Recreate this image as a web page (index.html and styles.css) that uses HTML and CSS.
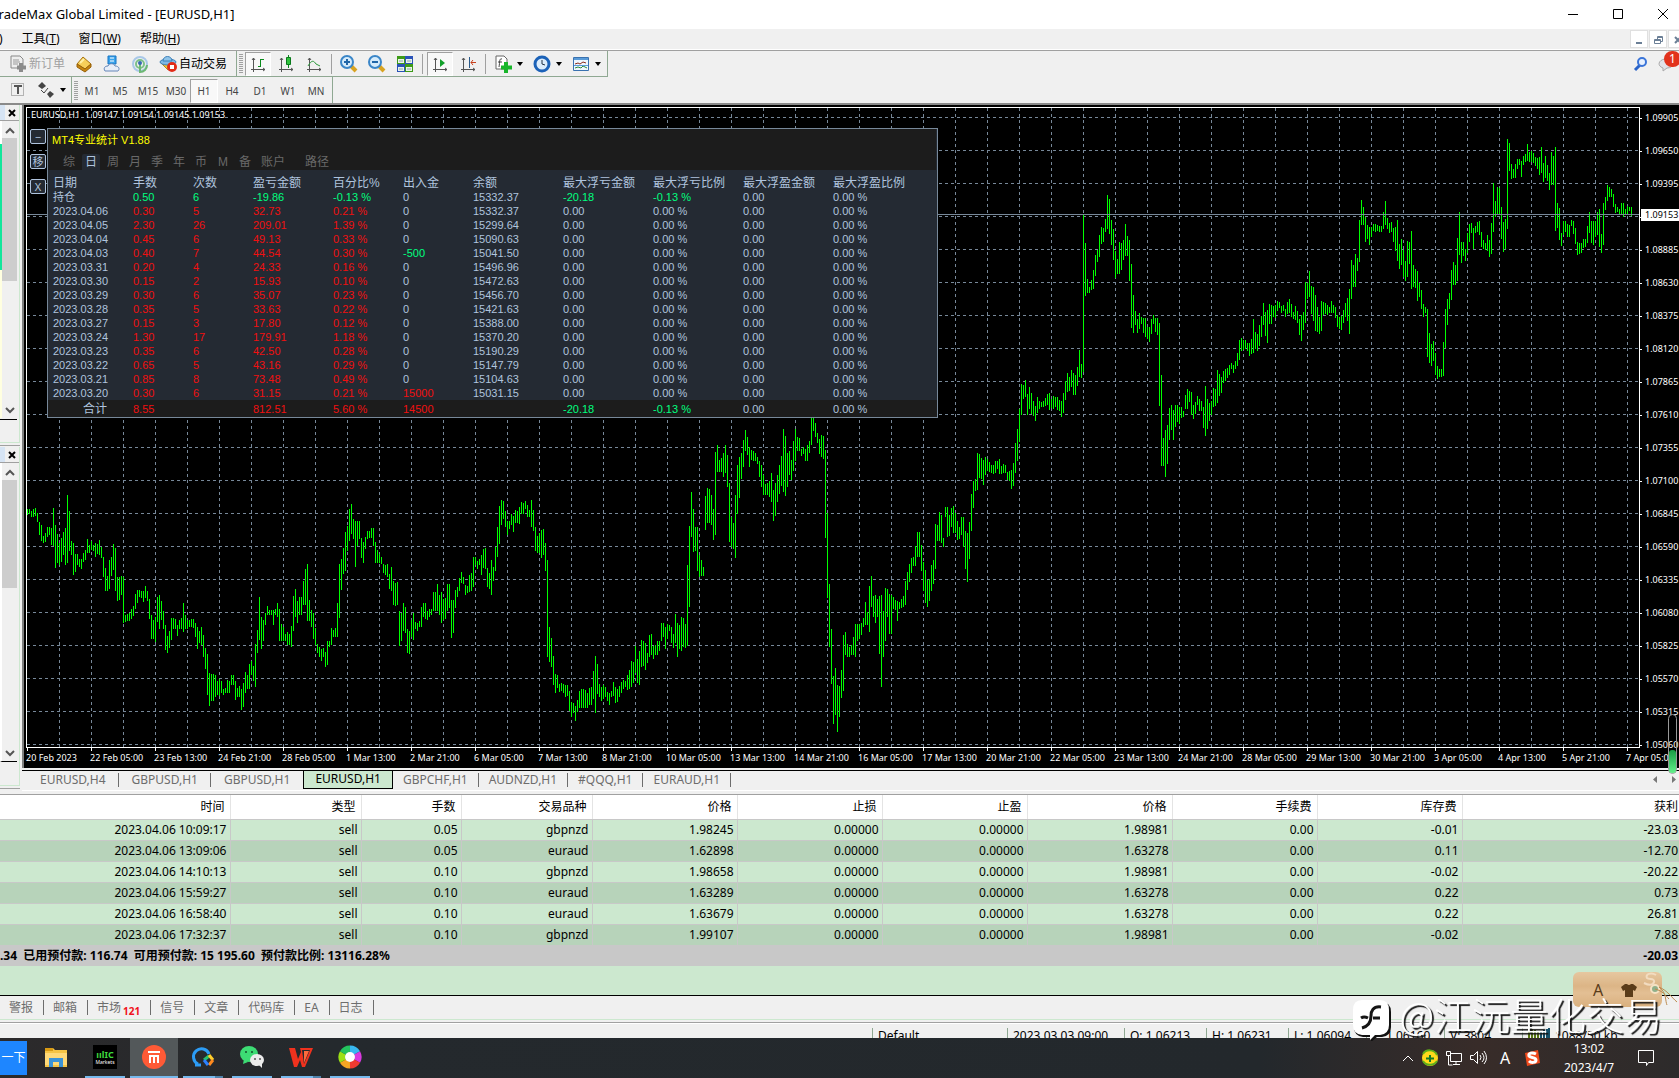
FILE: index.html
```html
<!doctype html>
<html lang="zh-CN">
<head>
	<meta charset="UTF-8">
	<title>TradeMax Global Limited - [EURUSD,H1]</title>

	<link rel="stylesheet" href="styles.css">
</head>
<body>
	<header class="titlebar">
		<h1>TradeMax Global Limited - [EURUSD,H1]</h1>
		<div class="window-buttons">
			<button aria-label="最小化"><svg width="12" height="12"><path d="M1 6.5h10" /></svg></button>
			<button aria-label="最大化"><svg width="12" height="12"><path d="M1.500 1.500h9v9h-9z" /></svg></button>
			<button aria-label="关闭"><svg width="12" height="12"><path d="M1 1l10 10M11 1L1 11" /></svg></button>
		</div>
	</header>

	<nav class="menubar">
		<button>)</button>
		<button>工具(<u>T</u>)</button>
		<button>窗口(<u>W</u>)</button>
		<button>帮助(<u>H</u>)</button>
		<div class="mdi-buttons">
			<button aria-label="最小化图表"><svg width="18" height="18"><path d="M5 12h6" stroke-width="2" /></svg></button>
			<button aria-label="还原图表"><svg width="18" height="18"><path d="M4.500 8.500h6v4h-6zM4.500 9.500h6M7.500 8V5.500h5v5H11M7.500 6.500h5" /></svg></button>
			<button aria-label="关闭图表"><svg width="18" height="18"><path d="M6 6l6 6M12 6l-6 6" stroke-width="2" /></svg></button>
		</div>
	</nav>

	<div class="toolbars">
		<div class="toolbar">
			<div class="group group-first">
				<button class="labelled disabled">
					<svg width="18" height="18"><path d="M2 1h9l3 3v9H2z" fill="#eee" stroke="#888" /><path d="M4 5h6M4 7h7M4 9h5" stroke="#999" /><path d="M12 8v9M8 12.500h9" stroke="#8b8b8b" stroke-width="4" /></svg>
					新订单
				</button>
				<button aria-label="数据"><svg width="18" height="18"><path d="M2 9l6-7 8 7-6 5z" fill="#f6cf5a" stroke="#a8730d" /><path d="M2 9l8 5 6-5v3l-6 5-8-5z" fill="#c8860f" stroke="#96610a" /><path d="M5 8l4-4" stroke="#fff0a8" stroke-width="2" /></svg></button>
				<button aria-label="账户"><svg width="18" height="18"><path d="M5 1h8v8H5z" fill="#3aa4ec" stroke="#1774c4" /><path d="M7 3h4M7 6h4" stroke="#fff" /><path d="M2 16c-2-3 0-5 3-5 1-3 6-3 7 0 4 0 5 3 3 5z" fill="#e8eef8" stroke="#6486b8" /></svg></button>
				<button aria-label="信号"><svg width="18" height="18" fill="none"><circle cx="9" cy="9" r="7" stroke="#a9c8e8" stroke-width="2" /><circle cx="9" cy="9" r="4" stroke="#7cc08a" stroke-width="2" /><path d="M9 8v9c4 0 7-3 7-7" stroke="#6cb873" stroke-width="2" /><circle cx="9" cy="8" r="2" fill="#3768b4" /></svg></button>
				<button class="labelled">
					<svg width="18" height="18"><path d="M1 7l8 8 7-7z" fill="#f1c232" stroke="#b98a18" /><ellipse cx="9" cy="7" rx="8" ry="3" fill="#7fb8e4" stroke="#3d80b8" /><path d="M4 6c0-6 9-6 9 0z" fill="#8fc4ea" stroke="#3d80b8" /><circle cx="13" cy="12" r="5" fill="#e22b17" /><path d="M11 10h4v4h-4z" fill="#fff" /></svg>
					自动交易
				</button>
			</div>
			<div class="group">
				<span class="grip"></span>
				<button class="active" aria-label="柱状图"><svg width="18" height="18" fill="none"><path d="M4.500 3v14M2 14.500h14M3 5l1.500-2L6 5M14 13l2 1.500-2 1.500" stroke="#555" /><path d="M11.500 4v8M9 11.500h2M12 4.500h3" stroke="#0a8a1c" /></svg></button>
				<button aria-label="蜡烛图"><svg width="18" height="18" fill="none"><path d="M4.500 3v14M2 14.500h14M3 5l1.500-2L6 5M14 13l2 1.500-2 1.500" stroke="#555" /><path d="M11.500 0v13" stroke="#0a8a1c" /><path d="M9.500 2.500h4v7h-4z" fill="#2fc23c" stroke="#0a7a1c" /></svg></button>
				<button aria-label="折线图"><svg width="18" height="18" fill="none"><path d="M4.500 3v14M2 14.500h14M3 5l1.500-2L6 5M14 13l2 1.500-2 1.500" stroke="#555" /><path d="M3 11c4-7 6-5 8-2l4 2" stroke="#2d9b3c" /></svg></button>
				<span class="divider"></span>
				<button aria-label="放大"><svg width="18" height="18"><path d="M11 11l5 5" stroke="#d8a321" stroke-width="4" /><circle cx="7" cy="7" r="6" fill="#d5ebfb" stroke="#3a86c8" stroke-width="2" /><path d="M4 7h6M7 4v6" stroke="#2066a8" stroke-width="2" /></svg></button>
				<button aria-label="缩小"><svg width="18" height="18"><path d="M11 11l5 5" stroke="#d8a321" stroke-width="4" /><circle cx="7" cy="7" r="6" fill="#d5ebfb" stroke="#3a86c8" stroke-width="2" /><path d="M4 7h6" stroke="#2066a8" stroke-width="2" /></svg></button>
				<button aria-label="平铺"><svg width="18" height="18"><path d="M1 1h8v8H1zM9 9h8v8H9z" fill="#3d9b17" /><path d="M9 1h8v8H9zM1 9h8v8H1z" fill="#2a52b8" /><path d="M2 4h6v4H2zM10 4h6v4h-6zM2 12h6v4H2zM10 12h6v4h-6z" fill="#eaf3ea" /><path d="M3 6h4M11 6h4M3 14h4M11 14h4" stroke="#8aa" /></svg></button>
				<span class="divider"></span>
				<button class="active" aria-label="自动滚动"><svg width="18" height="18" fill="none"><path d="M4.500 3v14M2 14.500h14M3 5l1.500-2L6 5M14 13l2 1.500-2 1.500" stroke="#555" /><path d="M9 4v8l5-4z" fill="#12a02a" /></svg></button>
				<button aria-label="图表平移"><svg width="18" height="18" fill="none"><path d="M4.500 3v14M2 14.500h14M3 5l1.500-2L6 5M14 13l2 1.500-2 1.500" stroke="#555" /><path d="M10.500 2v11" stroke="#2a5a8a" /><path d="M17 7.500h-5M14 5l-2 2.500 2 2.500" stroke="#c8401c" /></svg></button>
				<span class="divider"></span>
				<button class="drop" aria-label="指标"><svg width="18" height="18"><path d="M2 1h8l3 3v10H2z" fill="#fff" stroke="#666" /><path d="M8 4c-3-1-2 3-3 8M4 7h4" stroke="#444" fill="none" /><path d="M12 7v11M7 12.500h11" stroke="#18b52a" stroke-width="4" /></svg></button>
				<button class="drop" aria-label="周期"><svg width="18" height="18"><circle cx="9" cy="9" r="7" fill="#dcecfb" stroke="#1c62b8" stroke-width="3" /><path d="M9 5v4l3 1" stroke="#234" fill="none" /></svg></button>
				<button class="drop" aria-label="模板"><svg width="18" height="18" fill="none"><path d="M1.500 2.500h15v13h-15z" fill="#eef6ff" stroke="#3a72b0" /><path d="M2 4h14" stroke="#5a9bd8" stroke-width="2" /><path d="M3 9l3-1 2 1 3-2 3 1" stroke="#8a2a1a" /><path d="M3 13l3-1 3 1 2-2 4 2" stroke="#2d8a3c" /><path d="M2 10.500h14" stroke="#5a9bd8" /></svg></button>
			</div>
			<div class="toolbar-right">
				<button aria-label="搜索"><svg width="16" height="16"><path d="M2 14l5-5" stroke="#2a63c8" stroke-width="3" /><circle cx="9" cy="6" r="4" fill="#e8f1ff" stroke="#3a74d8" stroke-width="2" /></svg></button>
				<button class="messages" aria-label="消息"><svg width="18" height="18"><path d="M7 4c9-1 11 9 2 9l-4 3v-3C-1 11 0 5 7 4z" fill="#e2e2e8" stroke="#aaa" /></svg><span class="badge">1</span></button>
			</div>
		</div>

		<div class="toolbar">
			<div class="group group-objects">
				<button aria-label="文字"><svg width="18" height="18" fill="none"><path d="M2.500 2.500h12v12h-12z" stroke="#777" stroke-dasharray="1 1" /><path d="M5 5h8M9 5v8" stroke="#555" stroke-width="2" /></svg></button>
				<button class="drop" aria-label="箭头"><svg width="18" height="18"><path d="M1 5l4-4 4 4-4 3zM10 13l3-3 4 3-4 4z" fill="#444" /><path d="M4 9l3 3 4-5" stroke="#444" fill="none" /></svg></button>
			</div>
			<div class="group periods">
				<span class="grip"></span>
				<button>M1</button>
				<button>M5</button>
				<button>M15</button>
				<button>M30</button>
				<button class="active">H1</button>
				<button>H4</button>
				<button>D1</button>
				<button>W1</button>
				<button>MN</button>
			</div>
		</div>
	</div>

	<main class="workspace">
		<aside class="side">
			<section class="dock dock-market">
				<button class="dock-close" aria-label="关闭市场报价"><svg width="8" height="8"><path d="M1 1l6 6M7 1L1 7" /></svg></button>
				<div class="scroll">
					<svg width="10" height="7"><path d="M1 6l4-4 4 4" /></svg>
					<span class="thumb"></span>
					<svg width="10" height="7"><path d="M1 1l4 4 4-4" /></svg>
				</div>
			</section>
			<section class="dock dock-navigator">
				<button class="dock-close" aria-label="关闭导航"><svg width="8" height="8"><path d="M1 1l6 6M7 1L1 7" /></svg></button>
				<div class="scroll">
					<svg width="10" height="7"><path d="M1 6l4-4 4 4" /></svg>
					<span class="thumb"></span>
					<svg width="10" height="7"><path d="M1 1l4 4 4-4" /></svg>
				</div>
			</section>
		</aside>

		<div class="charts">
			<section class="chart">
				<div class="plot">
					<svg id="plot" width="100%" height="100%" shape-rendering="crispEdges"></svg>
					<p class="ohlc">EURUSD,H1&nbsp; 1.09147 1.09154 1.09145 1.09153</p>

					<div class="panel-buttons">
						<button aria-label="收起">−</button>
						<button>移</button>
						<button>X</button>
					</div>

					<div class="panel">
						<div class="panel-head">
							<h2>MT4专业统计 V1.88</h2>
							<nav>
								<button>综</button>
								<button class="active">日</button>
								<button>周</button>
								<button>月</button>
								<button>季</button>
								<button>年</button>
								<button>币</button>
								<button>M</button>
								<button>备</button>
								<button class="wide">账户</button>
								<button class="wide">路径</button>
							</nav>
						</div>
						<table class="stats">
							<colgroup>
								<col class="w85"><col class="w60"><col class="w60"><col class="w80"><col class="w70"><col class="w70"><col class="w90"><col class="w90"><col class="w90"><col class="w90"><col>
							</colgroup>
							<thead>
								<tr><th>日期</th><th>手数</th><th>次数</th><th>盈亏金额</th><th>百分比%</th><th>出入金</th><th>余额</th><th>最大浮亏金额</th><th>最大浮亏比例</th><th>最大浮盈金额</th><th>最大浮盈比例</th></tr>
							</thead>
							<tbody id="stats"></tbody>
							<tfoot>
								<tr><td>合计</td><td class="red">8.55</td><td></td><td class="red">812.51</td><td class="red">5.60 %</td><td class="red">14500</td><td></td><td class="green">-20.18</td><td class="green">-0.13 %</td><td>0.00</td><td>0.00 %</td></tr>
							</tfoot>
						</table>
					</div>
				</div>
				<div class="prices" id="prices"></div>
				<div class="times" id="times"></div>
			</section>

			<nav class="chart-tabs">
				<button>EURUSD,H4</button>
				<button>GBPUSD,H1</button>
				<button class="before">GBPUSD,H1</button>
				<button class="active">EURUSD,H1</button>
				<button>GBPCHF,H1</button>
				<button>AUDNZD,H1</button>
				<button>#QQQ,H1</button>
				<button>EURAUD,H1</button>
				<span class="tab-arrows"><svg width="28" height="10"><path d="M6 2v7L2 5.500zM21 2v7l4-3.500z" fill="#777" /></svg></span>
			</nav>
			<div class="gauge"><span></span></div>
		</div>
	</main>

	<section class="terminal">
		<table class="orders">
			<colgroup>
				<col class="c-time"><col class="c-type"><col class="c-lots"><col class="c-type"><col class="c-num"><col class="c-num"><col class="c-num"><col class="c-num"><col class="c-num"><col class="c-num"><col>
			</colgroup>
			<thead>
				<tr><th>时间</th><th>类型</th><th>手数</th><th>交易品种</th><th>价格</th><th>止损</th><th>止盈</th><th>价格</th><th>手续费</th><th>库存费</th><th>获利</th></tr>
			</thead>
			<tbody>
				<tr><td>2023.04.06 10:09:17</td><td>sell</td><td>0.05</td><td>gbpnzd</td><td>1.98245</td><td>0.00000</td><td>0.00000</td><td>1.98981</td><td>0.00</td><td>-0.01</td><td>-23.03</td></tr>
				<tr><td>2023.04.06 13:09:06</td><td>sell</td><td>0.05</td><td>euraud</td><td>1.62898</td><td>0.00000</td><td>0.00000</td><td>1.63278</td><td>0.00</td><td>0.11</td><td>-12.70</td></tr>
				<tr><td>2023.04.06 14:10:13</td><td>sell</td><td>0.10</td><td>gbpnzd</td><td>1.98658</td><td>0.00000</td><td>0.00000</td><td>1.98981</td><td>0.00</td><td>-0.02</td><td>-20.22</td></tr>
				<tr><td>2023.04.06 15:59:27</td><td>sell</td><td>0.10</td><td>euraud</td><td>1.63289</td><td>0.00000</td><td>0.00000</td><td>1.63278</td><td>0.00</td><td>0.22</td><td>0.73</td></tr>
				<tr><td>2023.04.06 16:58:40</td><td>sell</td><td>0.10</td><td>euraud</td><td>1.63679</td><td>0.00000</td><td>0.00000</td><td>1.63278</td><td>0.00</td><td>0.22</td><td>26.81</td></tr>
				<tr><td>2023.04.06 17:32:37</td><td>sell</td><td>0.10</td><td>gbpnzd</td><td>1.99107</td><td>0.00000</td><td>0.00000</td><td>1.98981</td><td>0.00</td><td>-0.02</td><td>7.88</td></tr>
			</tbody>
		</table>
		<div class="balance">
			<span>.34&nbsp; 已用预付款: 116.74&nbsp; 可用预付款: 15 195.60&nbsp; 预付款比例: 13116.28%</span>
			<span>-20.03</span>
		</div>
		<nav class="terminal-tabs">
			<button>警报</button>
			<button>邮箱</button>
			<button>市场<sub>121</sub></button>
			<button>信号</button>
			<button>文章</button>
			<button>代码库</button>
			<button>EA</button>
			<button>日志</button>
		</nav>
	</section>

	<footer class="status">
		<span class="s-profile">Default</span>
		<span class="s-date">2023.03.03 09:00</span>
		<span class="s-open">O: 1.06213</span>
		<span class="s-open">H: 1.06231</span>
		<span class="s-close">L: 1.06094</span>
		<span class="s-close">C: 1.06160</span>
		<span class="s-close">V: 3804</span>
		<span class="s-traffic"><svg width="22" height="12"><path d="M1 0v12M4 1v11M7 2v10M10 3v9" stroke="#5a7a14" stroke-width="2" /><path d="M13 3v9M16 2v10M19 1v11M21 0v12" stroke="#15506a" stroke-width="2" /></svg>1088/50 kb</span>
	</footer>

	<footer class="taskbar">
		<button class="search">一下</button>
		<button class="app" aria-label="资源管理器"><svg width="24" height="24"><path d="M1 3h8l2 2h12v17H1z" fill="#f6c445" /><path d="M1 3h8v3H1z" fill="#d89a14" /><path d="M1 8h22v12H1z" fill="#ffd978" /><path d="M5 22v-9h14v9h-4v-5H9v5z" fill="#3c93d6" /></svg></button>
		<button class="app open" aria-label="IC Markets"><span class="ic"><b>ıılIC</b><small>Markets</small></span></button>
		<button class="app open current" aria-label="MT4"><svg width="24" height="24"><circle cx="12" cy="12" r="12" fill="#ff5a36" /><path d="M6 7h12M7 11h10M8 11v7M12 11v7M16 11v7" stroke="#fff" stroke-width="2" /></svg></button>
		<button class="app open more" aria-label="QQ浏览器"><svg width="24" height="24" fill="none"><path d="M4 20h6M7 19a8 8 0 1 1 11-10" stroke="#2c9cf5" stroke-width="3" /><path d="M13 15l5-4" stroke="#27c26b" stroke-width="3" /><path d="M18 10l4 5" stroke="#ffce2b" stroke-width="3" /><path d="M22 15l-4 5" stroke="#ff8a1f" stroke-width="3" /><path d="M17 20l-4-5" stroke="#2b80ff" stroke-width="3" /></svg></button>
		<button class="app open" aria-label="微信"><svg width="24" height="24"><ellipse cx="9" cy="9" rx="9" ry="8" fill="#3ddc74" /><path d="M4 14l-1 5 5-2z" fill="#3ddc74" /><circle cx="6" cy="7" r="1" fill="#14532d" /><circle cx="12" cy="7" r="1" fill="#14532d" /><ellipse cx="17" cy="15" rx="7" ry="6" fill="#ececec" /><path d="M19 20l3 3v-5z" fill="#ececec" /><circle cx="15" cy="14" r="1" fill="#555" /><circle cx="20" cy="14" r="1" fill="#555" /></svg></button>
		<button class="app open more" aria-label="WPS"><svg width="24" height="24"><path d="M0 3h6l3 11 3-7-1-4h13l-8 19h-3l-2-7-3 7H5z" fill="#f0321e" /><path d="M13 5l8 0-6 14z" fill="#262a2d" /><path d="M15 6h5l-5 12z" fill="#ff6a3c" /></svg></button>
		<button class="app open" aria-label="浏览器"><svg width="24" height="24" fill="none" stroke-width="7"><path d="M12 4a8 8 0 0 1 7 4" stroke="#38b8f0" /><path d="M19 8a8 8 0 0 1 0 8" stroke="#d93ae0" /><path d="M19 16a8 8 0 0 1-7 4" stroke="#f03a30" /><path d="M12 20a8 8 0 0 1-7-4" stroke="#f5a623" /><path d="M5 16a8 8 0 0 1 0-8" stroke="#9be015" /><path d="M5 8a8 8 0 0 1 7-4" stroke="#23c45e" /><circle cx="12" cy="12" r="5" fill="#fff" stroke="none" /></svg></button>
		<div class="tray">
			<svg width="14" height="16"><path d="M2 11l5-5 5 5" /></svg>
			<svg width="18" height="18"><circle cx="9" cy="9" r="8" fill="#ffd91a" stroke="none" /><path d="M2 5c3-5 11-5 14 1M2 12c3 5 11 5 14 0" stroke="#5cae1c" stroke-width="2" /><path d="M9 6v7M5 9.500h8" stroke="#117a2b" stroke-width="2" /></svg>
			<svg width="18" height="16"><path d="M5.500 3.500h11v8h-11zM8 14.500h7M11 12v2M1.500 1.500h4v4h-4zM3.500 6v9h4" /></svg>
			<svg width="18" height="16"><path d="M1.500 5.500h3l4-4v12l-4-4h-3zM11 5q2 2 0 5M13 3q4 5 0 9M15 1q5 7 0 13" /></svg>
			<span class="ime">A</span>
			<svg width="18" height="18"><path d="M2 4l13-3 2 13-13 3z" fill="#f04a1c" stroke="none" /><path d="M13 5c-4-2-8-1-7 2 1 2 7 1 7 4s-5 3-7 1" stroke="#fff" stroke-width="3" /></svg>
			<time class="clock">13:02<br>2023/4/7</time>
			<svg width="18" height="18"><path d="M1.500 1.500h15v12h-5l-2 3v-3h-8z" /></svg>
		</div>
	</footer>

	<div class="ime-tag">
		<span>A</span>
		<svg width="16" height="14"><path d="M4 1h2q2 2 4 0h2l4 3-2 4-2-1v7H4V7L2 8 0 4z" fill="#5a3c1a" /></svg>
		<svg class="ime-cord" width="36" height="36" fill="none"><circle cx="12" cy="17" r="4" fill="#8fb08a" stroke="#f5e2c4" stroke-width="2" /><path d="M12 17c8 2 10 6 14 10M16 15c8 6 6 14 8 18M16 15c9 4 12 10 18 15" stroke="#bb8a50" /><path d="M13 3c-5-3-11-1-9 3 2 2 8 0 7 4s-6 3-10 1" stroke="#f2dcc0" stroke-width="2" /></svg>
	</div>

	<div class="watermark">
		<svg width="38" height="42"><path d="M10 3h18q10 0 10 10v15q0 9-9 10h-5l-6 5v-5h-8Q1 37 1 28V13Q1 3 10 3z" fill="#111" /><path d="M9 1h18q9 0 9 10v15q0 9-9 10h-5l-5 5v-5H9Q0 35 0 26V11Q0 1 9 1z" fill="#fff" /><path d="M28 8c-8-1-10 4-10 9 0 6-2 10-9 12M8 19q3-2 7 0M20 19h7" fill="none" stroke="#151515" stroke-width="3" /></svg>
		<span>@江沅量化交易</span>
	</div>

	<script src="chart.js"></script>
</body>
</html>
```

FILE: styles.css
```css
html {
	box-sizing: border-box;
}

*, *:before, *:after {
	box-sizing: inherit;
}

body {
	display: flex;
	flex-direction: column;
	height: 100vh;
	margin: 0;
	overflow: hidden;
	background: #f0f0f0;
	color: #000;
	font-family: "Noto Sans", "Noto Sans CJK SC", sans-serif;
	font-size: 12px;
	line-height: 16px;
}

h1, h2, p {
	margin: 0;
	font: inherit;
}

button {
	padding: 0;
	border: 0;
	background: none;
	color: inherit;
	font: inherit;
	white-space: nowrap;
}

svg {
	display: block;
	flex: none;
}

table {
	border-collapse: collapse;
	table-layout: fixed;
	width: 100%;
}

th, td {
	padding: 0;
	font-weight: normal;
	white-space: nowrap;
}

/* title and menu */

.titlebar {
	display: flex;
	flex: none;
	align-items: center;
	justify-content: space-between;
	height: 29px;
	padding: 0 10px 2px 0;
	background: #fff;
}

.titlebar h1 {
	margin-left: -8px;
	font-size: 13px;
}

.window-buttons {
	display: flex;
	gap: 33px;
}

.window-buttons svg {
	fill: none;
	stroke: #000;
}

.menubar {
	display: flex;
	flex: none;
	align-items: center;
	gap: 19px;
	height: 22px;
	padding-bottom: 2px;
	overflow: hidden;
	border-bottom: 1px solid #a0a0a0;
	box-shadow: inset 0 -1px #fff;
}

.menubar > button:first-child {
	margin-left: -1px;
}

.mdi-buttons {
	display: flex;
	gap: 1px;
	margin: 0 -7px 0 auto;
}

.mdi-buttons svg {
	border: 1px solid #e0e0e0;
	background: #fff;
	fill: none;
	stroke: #6b7f96;
}

/* toolbars */

.toolbars {
	flex: none;
	border-bottom: 2px solid #8a8a8a;
}

.toolbar {
	display: flex;
	height: 26px;
}

.group {
	display: flex;
	align-items: center;
	gap: 2px;
	height: 26px;
	padding-right: 2px;
	border-right: 1px solid #8fa892;
	border-bottom: 1px solid #8fa892;
}

.group-first {
	gap: 10px;
	padding-left: 9px;
	padding-right: 9px;
}

.group-objects {
	gap: 6px;
	padding-left: 9px;
	padding-right: 1px;
	border-bottom: 0;
}

.group button {
	display: flex;
	align-items: center;
	justify-content: center;
	min-width: 18px;
	height: 24px;
}

.group:not(.group-first):not(.group-objects):not(.periods) button {
	min-width: 26px;
}

.group .labelled {
	gap: 2px;
}

.group .disabled {
	color: #a0a0a0;
}

.group .active {
	border: 1px solid #a0a0a0;
	border-color: #a0a0a0 #fff #fff #a0a0a0;
	background: #f8f8f8;
}

.group .drop:after {
	content: "";
	margin-left: 5px;
	border: 3px solid transparent;
	border-top: 4px solid #000;
	border-bottom: 0;
}

.group .drop {
	padding: 0 4px;
}

.grip {
	width: 4px;
	height: 20px;
	margin-left: 2px;
	background: repeating-linear-gradient(#a0a0a0 0 1px, #f0f0f0 1px 2px);
}

.divider {
	width: 1px;
	height: 20px;
	margin: 0 2px;
	background: #a0a0a0;
}

.periods {
	gap: 0;
	padding-top: 2px;
	border-bottom: 0;
	color: #444;
	font-size: 10px;
}

.group.periods button {
	min-width: 28px;
}

.toolbar-right {
	display: flex;
	align-items: center;
	gap: 9px;
	margin-left: auto;
	padding-right: 3px;
}

.messages {
	position: relative;
}

.badge {
	position: absolute;
	top: -4px;
	left: 6px;
	width: 17px;
	border-radius: 9px;
	background: #e2321c;
	color: #fff;
}

/* docked windows on the left */

.workspace {
	display: flex;
	flex: 1;
	min-height: 0;
}

.side {
	display: flex;
	flex: none;
	flex-direction: column;
	width: 22px;
	padding: 0 2px 8px 0;
}

.dock {
	display: flex;
	flex: 1;
	flex-direction: column;
	border-right: 1px solid #cce8cf;
	border-bottom: 1px solid #cce8cf;
	box-shadow: 0 2px #f0f0f0, 0 3px #a0a0a0;
}

.dock-market {
	margin-bottom: 4px;
}

.dock-close {
	display: flex;
	flex: none;
	align-items: center;
	justify-content: flex-end;
	height: 16px;
	padding-right: 3px;
	border-bottom: 1px solid #a0a0a0;
	background: linear-gradient(90deg, #d6e4f4 5px, transparent 5px);
}

.dock-close svg {
	stroke: #000;
	stroke-width: 2;
}

.scroll {
	display: flex;
	flex: 1;
	flex-direction: column;
	align-items: center;
	margin: 0 2px 23px 0;
	padding: 6px 0 4px;
	border-bottom: 1px solid #000;
	border-left: 2px solid #fff;
}

.dock-market .scroll {
	border-image: linear-gradient(#fff 23px, #12e69b 23px, #12e69b 150px, #ffffe0 150px) 0 0 0 2;
	box-shadow: 0 1px #000;
}

.scroll svg {
	fill: none;
	stroke: #555;
	stroke-width: 2;
}

.thumb {
	width: 15px;
	height: 143px;
	margin: 4px 0 auto;
	background: #cdcdcd;
}

.dock-navigator .thumb {
	height: 108px;
}

/* price chart */

.charts {
	position: relative;
	display: flex;
	flex: 1;
	flex-direction: column;
	min-width: 0;
}

.chart {
	display: grid;
	flex: 1;
	grid-template-columns: 1fr 39px;
	grid-template-rows: 1fr 20px;
	min-height: 0;
	padding: 2px 0 0 2px;
	overflow: hidden;
	border-left: 2px solid #808080;
	background: #000;
	color: #fff;
	font-size: 9px;
	line-height: 12px;
}

.plot {
	position: relative;
	min-width: 0;
	min-height: 0;
	overflow: hidden;
	border: 1px solid #fff;
}

.grid {
	fill: none;
	stroke: #778899;
	stroke-dasharray: 3 3;
}

.bid {
	stroke: #778899;
}

.bars {
	fill: none;
	stroke: #00ff00;
}

.ohlc {
	position: absolute;
	top: 1px;
	left: 4px;
	font-size: 9px;
}

.prices {
	position: relative;
	height: 0;
	padding-top: 5px;
}

.prices span {
	display: flex;
	align-items: center;
	gap: 3px;
	height: 12px;
	margin-bottom: 21px;
}

.prices span:before {
	content: "";
	width: 2px;
	height: 1px;
	background: #fff;
}

.prices .bid-label {
	position: absolute;
	top: 102px;
	right: 0;
	left: 1px;
	padding-left: 4px;
	background: #fff;
	color: #000;
}

.prices .bid-label:before {
	display: none;
}

.times {
	display: flex;
	grid-column: 1 / 3;
}

.times span {
	flex: none;
	width: 64px;
	white-space: nowrap;
}

.times span:before {
	content: "";
	display: block;
	width: 1px;
	height: 3px;
	margin: 0 0 1px 1px;
	background: #fff;
}

.gauge {
	position: absolute;
	right: 2px;
	bottom: 20px;
	display: flex;
	align-items: flex-end;
	width: 9px;
	height: 60px;
	border: 1px solid #999;
	border-radius: 5px;
}

.gauge span {
	width: 7px;
	height: 23px;
	border-radius: 3px;
	background: linear-gradient(#1a9c44, #62f08a);
}

/* statistics overlay */

.panel-buttons {
	position: absolute;
	top: 21px;
	left: 3px;
	display: flex;
	flex-direction: column;
	gap: 10px;
}

.panel-buttons button {
	width: 16px;
	height: 15px;
	border: 1px solid #b0c4de;
	border-radius: 2px;
	background: #242a33;
	color: #b0c4de;
	font-size: 11px;
	line-height: 12px;
}

.panel {
	position: absolute;
	top: 20px;
	left: 20px;
	width: 891px;
	border: 1px solid #778899;
	background: #242a33;
	color: #b0c4de;
	font-family: "Liberation Sans", "Noto Sans CJK SC", sans-serif;
	font-size: 11px;
	line-height: 14px;
}

.panel-head {
	margin-right: 1px;
	padding: 3px 0 0 4px;
	background: #1c1c1c;
}

.panel h2 {
	color: #ffff00;
	font-size: 11px;
	line-height: 16px;
}

.panel nav {
	display: flex;
	align-items: flex-end;
	height: 22px;
	padding-left: 8px;
	color: #696969;
	font-size: 12px;
}

.panel nav button {
	width: 18px;
	height: 16px;
	margin-right: 4px;
}

.panel nav .wide {
	width: 28px;
	margin-right: 16px;
	padding-left: 2px;
}

.panel nav .active {
	border-radius: 2px 2px 0 0;
	background: #242a33;
	color: #b0c4de;
}

.stats thead th {
	height: 20px;
	padding-top: 6px;
}

.stats th {
	font-size: 12px;
	text-align: left;
}

.stats th, .stats tbody td {
	line-height: 14px;
}

.stats th:first-child, .stats td:first-child {
	padding-left: 5px;
}

.stats tfoot td {
	height: 17px;
	background: #1c1c1c;
}

.stats tfoot td:first-child {
	padding-left: 35px;
	font-size: 12px;
}

.red {
	color: #f01010;
}

.green {
	color: #00ff7f;
}

.w60 {
	width: 60px;
}

.w70 {
	width: 70px;
}

.w80 {
	width: 80px;
}

.w85 {
	width: 85px;
}

.w90 {
	width: 90px;
}

/* chart tabs */

.chart-tabs {
	display: flex;
	flex: none;
	height: 26px;
	padding: 3px 0 5px 5px;
	background: linear-gradient(#f0f0f0 2px, #000 2px, #000 3px, #f0f0f0 3px, #f0f0f0 22px, #fff 22px, #fff 23px, #f0f0f0 23px);
	color: #6d6d6d;
}

.chart-tabs button {
	position: relative;
	padding: 0 13px;
}

.chart-tabs button:not(.active):not(.before):after {
	content: "";
	position: absolute;
	top: 2px;
	right: 0;
	width: 1px;
	height: 14px;
	background: #6d6d6d;
}

.chart-tabs .active {
	padding: 0 11px;
	border: 1px solid #000;
	border-top: 0;
	background: #cce8cf;
	color: #000;
}

.chart-tabs .active ~ button {
	padding: 0 11px 0 10px;
}

.tab-arrows {
	margin: 3px 0 0 auto;
}

/* terminal */

.terminal {
	flex: none;
	border-top: 1px solid #a0a0a0;
	background: #cce8cf;
}

.orders {
	text-align: right;
}

.orders th {
	height: 25px;
	padding-right: 5px;
	border-right: 1px solid #e4e4e4;
	border-bottom: 1px solid #c8c8c8;
	background: #fff;
}

.orders td {
	height: 21px;
	padding-right: 3px;
	border-right: 1px solid #c8c8c8;
	border-bottom: 1px solid #c8c8c8;
}

.orders th:last-child, .orders td:last-child {
	padding-right: 1px;
	border-right: 0;
}

.orders tbody tr:nth-child(even) {
	background: #b7d3ba;
}

.c-time {
	width: 230px;
}

.c-type {
	width: 131px;
}

.c-lots {
	width: 100px;
}

.c-num {
	width: 145px;
}

.balance {
	display: flex;
	justify-content: space-between;
	margin-bottom: 29px;
	padding: 2px 1px 2px 0;
	background: #c8c8c8;
	font-weight: bold;
}

.terminal-tabs {
	display: flex;
	height: 28px;
	padding: 4px 0 7px;
	border-top: 1px solid #000;
	border-bottom: 1px solid #a0a0a0;
	background: linear-gradient(#f0f0f0 23px, #cce8cf 23px, #cce8cf 24px, #f0f0f0 24px);
	color: #6d6d6d;
}

.terminal-tabs button {
	padding: 0 10px 0 9px;
	border-right: 1px solid #6d6d6d;
	line-height: 14px;
}

.terminal-tabs sub {
	margin-left: 2px;
	color: #f01020;
	font-size: 10px;
	font-weight: bold;
	line-height: 0;
}

.status {
	display: flex;
	flex: none;
	justify-content: flex-end;
	height: 15px;
	overflow: hidden;
	border-top: 1px solid #fff;
}

.status span {
	flex: none;
	height: 20px;
	margin-top: 4px;
	padding-left: 5px;
	border-left: 1px solid #8fa892;
}

.s-profile {
	width: 135px;
}

.s-date {
	width: 117px;
}

.s-open {
	width: 82px;
}

.s-close {
	width: 78px;
}

.status .s-traffic {
	display: flex;
	gap: 5px;
	width: 157px;
}

/* windows taskbar */

.taskbar {
	display: flex;
	flex: none;
	height: 40px;
	background: linear-gradient(90deg, #2c2a2b, #24292d 20%, #23282c 75%, #382c29 88%, #2d2b2b);
	color: #fff;
}

.search {
	width: 27px;
	height: 34px;
	margin: 3px 5px 0 0;
	background: #1e86ff;
}

.app {
	display: flex;
	align-items: center;
	justify-content: center;
	width: 48px;
	margin-right: 1px;
	border-bottom: 2px solid transparent;
}

.open {
	background: linear-gradient(#76b9ed, #76b9ed) center bottom / 40px 2px no-repeat border-box;
}

.open.more {
	background-image: linear-gradient(90deg, #76b9ed 32px, #4f82aa 32px);
}

.open.current {
	background-color: #53585a;
	background-size: 48px 2px;
}

.ic {
	display: flex;
	flex-direction: column;
	justify-content: center;
	width: 24px;
	height: 24px;
	background: #000;
}

.ic b {
	color: #3ddc3d;
	font-size: 9px;
	line-height: 9px;
}

.ic small {
	font-size: 5px;
	line-height: 6px;
}

.tray {
	display: flex;
	align-items: center;
	gap: 6px;
	margin-left: auto;
	padding-right: 24px;
}

.tray svg {
	fill: none;
	stroke: #fff;
}

.ime {
	width: 24px;
	font-size: 16px;
	text-align: center;
}

.clock {
	width: 80px;
	margin: 0 2px;
	line-height: 19px;
	text-align: center;
}

/* floating things */

.ime-tag {
	position: fixed;
	right: 17px;
	bottom: 71px;
	display: flex;
	align-items: center;
	gap: 18px;
	width: 89px;
	height: 35px;
	padding-left: 20px;
	border-radius: 6px;
	background: linear-gradient(#e6c7a0, #dcb586 40%, #e3bf94 60%, #d9b07e);
	color: #5a3c1a;
	font-size: 16px;
}

.ime-cord {
	position: absolute;
	top: 0;
	left: 70px;
}

.watermark {
	position: fixed;
	right: 17px;
	bottom: 37px;
	display: flex;
	align-items: flex-start;
	gap: 8px;
	color: #fff;
	font-family: "Noto Sans CJK SC", sans-serif;
	font-size: 38px;
	font-weight: 300;
	line-height: 30px;
	text-shadow: 2px 2px 1px #111;
	white-space: nowrap;
}
```

FILE: chart.js
```js
var STEP = 2;
var GRID_X = 32;
var GRID_Y = 33;
var FIRST_LINE = 9;

// Each block has its own origin and horizontal scale, bars are "x high low"
var blocks = [
	{ x: -27.5, y: 312, scale: 2.8, bars: '77 268 285;82 268 283;88 272 290;94 268 290;99 264 288;104 278 305;110 305 346;116 315 362;122 348 368;127 338 365;133 322 352;138 322 345;144 325 374;149 264 378;155 315 443;161 342 430;166 370 435;172 354 425;177 336 406;183 324 436;189 226 430;194 274 392;200 362 404;205 370 464;211 402 455;217 403 436;222 416 440;228 416 446;234 399 425;239 390 420;245 357 400;251 374 398;256 362 390;262 374 392;267 370 410;273 372 402;278 360 404;284 380 414;289 412 470;295 445 512;301 468 512;306 420 508;312 410 468;318 373 450;323 384 512;329 472 542;334 472 540;340 468 524;346 472 610;351 584 606;357 582 604;363 578 604;368 567 596;374 558 588;379 522 568;385 510 550;391 511 532;396 512 535;402 512 546;407 498 535;413 514 542;418 538 596;424 584 656;430 600 658;435 592 666;441 532 606;446 526 626;452 543 600;457 572 628;463 616 690;469 648 698;474 633 684;480 594 660;486 594 628;491 598 628;497 614 648;502 600 626;508 594 626;513 549 635;519 584 628;525 600 626;530 600 622;536 598 622;541 598 624;547 610 652;553 622 686;558 633 668;564 622 676;569 645 712;575 684 746;581 702 824;586 760 857;592 762 842;597 762 842;603 766 830;609 784 826;614 778 828;620 782 818;625 806 826;631 804 820;637 780 820;642 782 820;648 766 794;653 764 794;659 782 840;664 804 832;670 798 832;676 808 870;681 790 860;687 756 820;692 766 806;698 732 808;704 724 766;709 738 782;715 672 800;721 630 700;726 532 660;732 592 686;737 600 662;743 578 614;749 558 584;754 570 586;760 570 584;765 570 614;771 568 584;777 549 590;782 568 662;788 612 662;793 620 664;799 642 664;805 636 676;810 642 676;816 618 680;821 528 632;827 507 592;832 542 608;838 532 584;844 532 584;849 484 556;855 447 554;861 432 602;866 540 602;872 571 622;878 580 656;883 624 676;889 672 700;894 680 710;900 686 724;906 684 710;911 696 742;917 662 734;922 664 680;928 625 676;934 630 652;939 625 650;945 549 650;950 432 594;956 417 510;962 384 462;967 336 452;973 318 394;978 268 362;984 252 342;990 297 356;995 304 440;1001 304 378;1006 304 358;1012 354 414;1017 366 430;1023 352 386;1029 332 356;1034 334 354;1040 324 354;1045 324 378;1051 366 430;1057 390 428;1062 402 430;1068 412 432;1074 432 458;1079 434 466;1085 432 470;1090 462 506;1096 440 514;1102 484 556;1107 490 558;1113 486 554;1118 572 678;1124 578 664;1130 549 634;1135 560 640;1141 628 698;1146 634 702;1152 600 652;1158 580 660;1163 606 628;1169 608 632;1174 604 622;1180 562 620;1185 549 590;1191 549 598;1197 572 600;1202 568 590;1208 566 586;1213 516 574;1219 516 572;1225 492 574;1230 526 584;1236 516 608;1241 537 600;1247 534 596;1253 492 572;1258 492 564;1264 540 654;1270 540 640;1275 510 564;1281 502 532;1287 474 514;1292 456 490;1298 472 492;1303 494 524;1309 498 518;1314 466 516;1320 460 514;1326 410 500;1331 412 436;1337 424 448;1342 416 434;1348 404 464;1354 388 444;1359 384 446;1365 444 502;1370 458 508;1376 420 524;1382 442 482;1387 380 454;1393 322 412;1398 258 372;1404 240 314;1410 242 296;1415 274 320;1421 302 344;1426 302 328;1432 282 316;1438 288 336;1443 270 308;1449 272 310;1454 262 312;1460 246 282;1465 248 282;1471 244 266;1477 254 290;1482 270 292;1488 240 320;1494 270 334;1499 322 392;1505 348 398;1510 338 400;1516 330 414;1522 328 404;1527 370 454' },
	{ x: 512.5, y: 272, scale: 2.8, bars: '16 490 572;21 540 830;27 741 846;32 774 862;38 828 914;43 882 938;49 884 924;54 912 936;60 908 934;66 912 938;71 916 950;77 916 948;82 934 994;88 966 1010;94 970 1000;99 978 1022;105 960 996;110 932 984;116 928 984;122 926 984;127 930 984;133 940 984;139 924 974;144 922 974;150 874 958;155 828 1000;161 852 942;167 912 950;172 920 962;178 916 956;184 920 950;189 936 962;195 938 976;200 932 950;206 906 948;211 922 968;217 926 966;223 918 950;228 906 938;234 900 926;240 902 922;245 886 930;250 870 926;256 842 920;262 846 908;267 798 880;273 836 910;278 812 914;284 780 862;290 782 858;295 790 870;301 818 848;306 764 832;312 762 826;317 798 838;323 796 824;329 784 824;334 782 812;340 728 784;346 728 770;351 742 808;357 732 776;362 734 754;368 742 790;374 762 804;379 702 790;385 730 830;390 734 808;396 712 814;402 714 800;407 732 804;413 556 798;418 438 682;424 336 470;430 388 516;435 442 514;441 442 574;446 524 592;452 540 588;458 562 588;463 348 450;469 324 430;475 326 428;480 346 434;486 388 480;491 216 464;497 196 276;502 240 276;508 234 276;514 220 290;519 196 280;525 224 322;530 310 486;536 412 500;541 430 506;547 346 534;553 256 402;558 232 354;564 220 296;570 180 262;575 150 212;581 172 226;586 202 262;592 210 240;598 212 242;603 218 242;609 230 252;614 244 292;620 254 320;626 286 344;631 312 344;637 310 346;642 304 350;648 280 366;654 330 422;659 310 408;665 286 366;670 256 342;676 228 318;682 148 336;687 168 348;693 220 320;698 214 284;704 240 300;710 184 272;715 148 242;721 170 214;726 174 214;732 206 228;738 200 222;743 208 242;749 194 242;754 184 220;760 100 194;765 100 154;771 128 170;777 158 190;782 176 222;788 166 232;794 168 236;799 210 474;805 400 654;810 612 802;816 748 912;822 888 1032;827 864 1004;833 916 1056;838 918 1010;844 870 954;849 766 932;855 756 826;861 792 830;866 800 830;872 796 826;878 770 824;883 732 832;889 732 784;894 732 776;900 730 766;906 714 740;911 666 734;917 696 736;922 618 756;928 588 682;934 648 710;939 646 728;945 658 710;950 648 822;956 646 920;962 694 832;967 624 782;973 628 710;978 642 762;984 646 762;990 652 686;995 660 690;1001 662 722;1006 666 686;1012 658 684;1017 648 682;1023 602 676;1029 576 630;1034 552 606;1040 534 578;1046 530 558;1051 498 558;1057 456 532;1062 456 530;1068 496 574;1074 546 632;1079 570 668;1085 600 682;1090 596 662;1096 556 632;1102 540 612;1107 432 566;1113 436 484;1118 396 484;1124 406 488;1130 474 500;1135 380 410;1141 380 470;1146 404 468;1152 384 440;1158 378 458;1163 398 458;1169 422 480;1174 440 478;1180 410 466;1186 412 500;1191 454 566;1197 458 606;1202 426 536;1208 342 452;1214 304 384;1219 298 332;1225 220 330;1230 222 294;1236 234 296;1241 240 316;1247 230 284;1253 236 272;1258 246 276;1264 256 278;1270 256 282;1275 242 280;1281 244 266;1286 238 282;1292 258 282;1298 252 280;1303 254 280;1309 276 300;1314 274 302;1320 270 326;1326 250 318;1331 190 280;1337 146 244;1342 86 186;1348 12 104;1354 16 56;1360 0 50;1365 42 104;1370 20 88;1376 38 102;1382 64 108;1387 78 122;1393 52 98;1398 64 86;1404 66 80;1410 64 80;1415 54 78;1421 42 76;1426 40 90;1432 56 84;1438 48 88;1443 50 80;1449 50 90;1455 60 92;1460 62 110;1466 40 100;1471 4 60;1477 -20 36;1483 -10 34;1488 -30 20;1494 -20 46;1499 -15 46;1505 -40 18' },
	{ x: 1052.5, y: -8, scale: 2.618, bars: '-1 750 830;4 792 834;9 343 816;14 430 588;20 537 580;25 560 578;30 540 570;36 510 566;41 464 528;46 450 486;51 405 472;57 380 432;62 384 426;67 356 396;72 285 388;77 296 402;82 360 436;88 388 480;93 452 534;98 476 522;103 426 522;109 430 510;114 420 480;119 372 468;124 408 468;130 420 542;135 492 684;140 586 698;145 632 674;151 656 698;156 640 686;161 652 672;166 654 698;172 654 712;177 682 716;182 680 726;187 658 702;193 646 672;198 654 696;203 654 704;208 670 918;214 826 1098;219 1014 1098;224 990 1130;229 974 1092;235 924 1020;240 915 990;245 930 1020;250 916 980;255 916 966;260 922 972;266 922 954;271 934 952;276 884 926;281 867 926;287 872 906;292 876 944;297 916 958;302 906 942;308 888 914;313 896 932;318 904 932;323 920 984;328 858 1008;333 896 986;339 908 962;344 904 944;349 864 920;354 868 918;360 810 908;365 822 888;370 830 880;375 812 848;381 806 844;386 804 834;391 794 826;396 790 808;402 796 818;407 784 806;412 760 798;417 720 780;422 714 752;428 720 750;433 720 746;438 730 752;444 730 768;449 716 762;454 657 758;459 696 746;464 702 754;470 676 738;475 648 712;480 610 674;485 636 708;491 630 728;496 612 672;501 616 672;506 618 650;511 614 654;517 602 634;522 606 624;527 618 640;532 614 634;538 628 650;543 606 642;548 598 640;553 612 650;559 636 658;564 618 660;569 634 668;574 656 704;580 646 722;585 636 690;590 546 668;595 548 596;600 514 590;606 558 642;611 562 664;616 584 692;621 620 696;627 652 702;632 602 692;637 606 646;642 608 642;648 614 644;653 620 640;658 602 640;663 614 638;669 622 654;674 646 682;679 652 688;684 648 690;689 630 668;695 608 650;700 594 664;705 568 702;710 480 596;716 496 562;721 462 560;726 474 512;731 360 486;737 300 376;742 320 374;747 352 426;753 374 416;758 382 434;763 380 412;768 372 394;774 372 396;779 374 392;784 378 396;789 378 396;795 336 388;799 303 374;805 354 388;810 370 398;815 366 396;820 384 426;826 380 452;831 360 482;836 432 508;841 418 496;847 450 532;852 484 542;857 424 530;862 426 492;867 392 568;873 496 562;878 508 564;883 514 604;889 548 590;894 570 626;899 612 650;904 622 640;909 628 772;915 700 788;920 732 798;925 722 782;930 758 824;936 798 838;941 808 832;946 808 832;951 726 828;956 628 744;962 598 674;967 580 626;972 510 600;978 486 556;983 496 554;988 414 542;993 336 464;998 426 488;1004 426 468;1009 446 482;1014 400 458;1019 372 426;1025 370 398;1030 384 446;1035 378 398;1041 366 396;1046 363 406;1051 396 442;1056 420 448;1061 430 450;1066 406 452;1072 420 470;1077 370 462;1082 250 396;1087 304 350;1093 262 342;1098 264 342;1103 322 418;1108 366 456;1113 358 448;1119 117 386;1124 130 212;1129 192 236;1135 208 234;1140 192 234;1145 178 206;1150 178 196;1155 184 230;1161 168 194;1166 162 186;1171 132 182;1176 156 186;1182 154 186;1187 158 188;1192 172 198;1197 174 206;1203 170 224;1208 142 218;1213 188 246;1218 168 234;1223 194 242;1229 220 270;1234 156 256;1239 168 254;1244 141 392;1249 308 384;1255 324 420;1260 400 438;1265 362 406;1270 364 396;1276 372 410;1281 376 410;1286 360 378;1292 364 402;1297 384 432;1302 426 464;1307 430 462;1312 430 458;1318 418 444;1323 416 442;1328 378 428;1333 336 400;1338 362 428;1344 364 434;1349 364 412;1354 336 406;1360 326 442;1365 402 458;1370 310 434;1375 292 330;1381 256 302;1386 262 290;1391 268 290;1396 282 320;1401 312 338;1407 322 336;1412 328 342;1417 310 344;1422 308 350;1427 326 346;1433 318 342;1438 320 332;1443 322 348;1448 342 346' }
];

function path(className, d) {
	return '<path class="' + className + '" d="' + d + '"/>';
}

function drawPlot() {
	var svg = document.querySelector('#plot');
	var width = svg.clientWidth;
	var height = svg.clientHeight;
	var grid = '';
	var bars = '';

	for (var x = GRID_X; x < width; x += GRID_X) {
		grid += 'M' + (x + 0.5) + ' 0V' + height;
	}

	for (var y = FIRST_LINE; y < height; y += GRID_Y) {
		grid += 'M0 ' + (y + 0.5) + 'H' + width;
	}

	blocks.forEach(function (block) {
		block.bars.split(';').forEach(function (bar) {
			var values = bar.split(' ').map(Number);
			var column = Math.round((block.x + values[0] / block.scale) / STEP) * STEP;
			var high = Math.round(block.y + values[1] / 3);
			var low = Math.round(block.y + values[2] / 3);
			bars += 'M' + (column + 0.5) + ' ' + high + 'V' + low;
		});
	});

	svg.innerHTML = path('grid', grid) + path('bars', bars) + path('bid', 'M0 106.5H' + width);
}

function drawAxes() {
	var prices = '';

	for (var i = 0; i < 20; i++) {
		// The fourth line is covered by the bid price
		prices += '<span>' + (i === 3 ? '' : (1.09905 - i * 0.00255).toFixed(5)) + '</span>';
	}

	document.querySelector('#prices').innerHTML = prices + '<span class="bid-label">1.09153</span>';

	var times = ['20 Feb 2023', '22 Feb 05:00', '23 Feb 13:00', '24 Feb 21:00', '28 Feb 05:00', '1 Mar 13:00', '2 Mar 21:00', '6 Mar 05:00', '7 Mar 13:00', '8 Mar 21:00', '10 Mar 05:00', '13 Mar 13:00', '14 Mar 21:00', '16 Mar 05:00', '17 Mar 13:00', '20 Mar 21:00', '22 Mar 05:00', '23 Mar 13:00', '24 Mar 21:00', '28 Mar 05:00', '29 Mar 13:00', '30 Mar 21:00', '3 Apr 05:00', '4 Apr 13:00', '5 Apr 21:00', '7 Apr 05:00'];

	document.querySelector('#times').innerHTML = times.map(function (time) {
		return '<span>' + time + '</span>';
	}).join('');
}

// date, lots, count, profit, percent, deposit, balance
var days = [
	['持仓', '0.50', '6', '-19.86', '-0.13 %', '0', '15332.37'],
	['2023.04.06', '0.30', '5', '32.73', '0.21 %', '0', '15332.37'],
	['2023.04.05', '2.30', '26', '209.01', '1.39 %', '0', '15299.64'],
	['2023.04.04', '0.45', '6', '49.13', '0.33 %', '0', '15090.63'],
	['2023.04.03', '0.40', '7', '44.54', '0.30 %', '-500', '15041.50'],
	['2023.03.31', '0.20', '4', '24.33', '0.16 %', '0', '15496.96'],
	['2023.03.30', '0.15', '2', '15.93', '0.10 %', '0', '15472.63'],
	['2023.03.29', '0.30', '6', '35.07', '0.23 %', '0', '15456.70'],
	['2023.03.28', '0.35', '5', '33.63', '0.22 %', '0', '15421.63'],
	['2023.03.27', '0.15', '3', '17.80', '0.12 %', '0', '15388.00'],
	['2023.03.24', '1.30', '17', '179.91', '1.18 %', '0', '15370.20'],
	['2023.03.23', '0.35', '6', '42.50', '0.28 %', '0', '15190.29'],
	['2023.03.22', '0.65', '5', '43.16', '0.29 %', '0', '15147.79'],
	['2023.03.21', '0.85', '8', '73.48', '0.49 %', '0', '15104.63'],
	['2023.03.20', '0.30', '6', '31.15', '0.21 %', '15000', '15031.15']
];

function drawStats() {
	document.querySelector('#stats').innerHTML = days.map(function (day, row) {
		var color = row ? 'red' : 'green';
		var drawdown = row ? ['0.00', '0.00 %'] : ['-20.18', '-0.13 %'];

		return '<tr>' + day.concat(drawdown, '0.00', '0.00 %').map(function (value, i) {
			var name = '';

			if (i > 0 && i < 5) {
				name = color;
			} else if (i === 5 && value !== '0') {
				name = value < 0 ? 'green' : 'red';
			} else if (!row && (i === 7 || i === 8)) {
				name = 'green';
			}

			return '<td class="' + name + '">' + value + '</td>';
		}).join('') + '</tr>';
	}).join('');
}

drawAxes();
drawStats();
drawPlot();
window.addEventListener('resize', drawPlot);
```
